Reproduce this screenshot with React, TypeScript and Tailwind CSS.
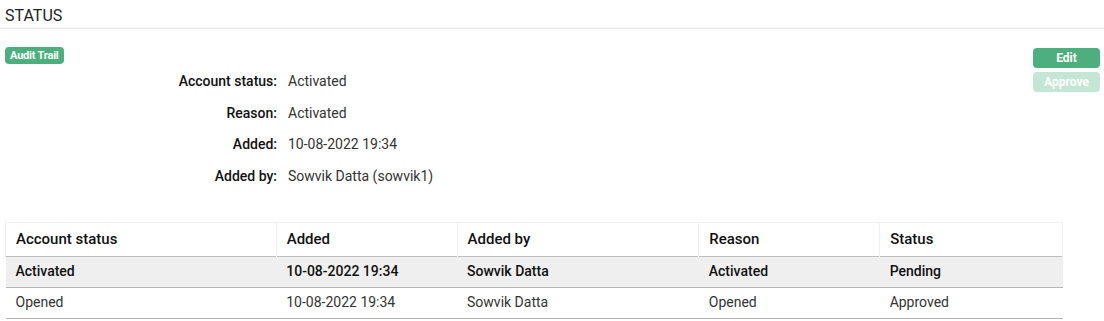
const details = [
  { label: 'Account status:', value: 'Activated' },
  { label: 'Reason:', value: 'Activated' },
  { label: 'Added:', value: '10-08-2022 19:34' },
  { label: 'Added by:', value: 'Sowvik Datta (sowvik1)' },
];

const columns = [
  { title: 'Account status', width: 'w-[271px]' },
  { title: 'Added', width: 'w-[181px]' },
  { title: 'Added by', width: 'w-[242px]' },
  { title: 'Reason', width: 'w-[181px]' },
  { title: 'Status', width: 'w-[183px]' },
];

const rows = [
  { cells: ['Activated', '10-08-2022 19:34', 'Sowvik Datta', 'Activated', 'Pending'], current: true },
  { cells: ['Opened', '10-08-2022 19:34', 'Sowvik Datta', 'Opened', 'Approved'], current: false },
];

export default function App() {
  return (
    <div
      className="w-[1104px] h-[321px] bg-white text-[#222]"
      style={{ fontFamily: 'Roboto, "Liberation Sans", Arial, sans-serif' }}
    >
      <div className="px-[5px] pt-[7px] pb-[3px] border-b border-[#e6e6e6]">
        <h2 className="text-[16px] leading-[18px] text-[#222]">STATUS</h2>
      </div>

      <div className="flex pl-[5px] pr-[4px] pt-[18px]">
        <div className="flex-1">
          <span className="block w-fit rounded-[4px] bg-[#4caf7d] px-[5px] h-[17px] leading-[17px] text-[11px] font-bold text-white tracking-[-0.2px]">
            Audit Trail
          </span>
          <div className="flex flex-col gap-[12.6px] mt-[8px]">
            {details.map((d) => (
              <div key={d.label} className="flex items-center text-[14px] leading-[19px]">
                <span className="w-[272px] text-right font-medium text-[#111]">{d.label}</span>
                <span className="ml-[11px] text-[#333]">{d.value}</span>
              </div>
            ))}
          </div>
        </div>
        <div className="flex flex-col gap-[4px] pt-[1px]">
          <button className="w-[67px] h-[20px] rounded-[4px] bg-[#4caf7d] text-[12px] font-bold text-white leading-[20px]">
            Edit
          </button>
          <button className="w-[67px] h-[20px] rounded-[4px] bg-[#c4e6d4] text-[12px] font-bold text-white leading-[20px]">
            Approve
          </button>
        </div>
      </div>

      <div className="px-[5px] mt-[36px]">
        <table className="border-collapse text-[14px] w-[1058px]">
          <thead>
            <tr className="h-[34px] border-b border-[#bdbdbd]">
              {columns.map((c) => (
                <th
                  key={c.title}
                  className={`${c.width} text-left font-medium text-[15px] text-[#111] px-[10px] border-x border-t border-[#f0f0f0]`}
                >
                  {c.title}
                </th>
              ))}
            </tr>
          </thead>
          <tbody>
            {rows.map((r, i) => (
              <tr
                key={i}
                className={`h-[31px] border-b border-[#b5b5b5] ${r.current ? 'bg-[#efefef] font-medium text-[#111]' : 'text-[#333]'}`}
              >
                {r.cells.map((cell, j) => (
                  <td key={j} className="px-[10px]">
                    {cell}
                  </td>
                ))}
              </tr>
            ))}
          </tbody>
        </table>
      </div>
    </div>
  );
}
